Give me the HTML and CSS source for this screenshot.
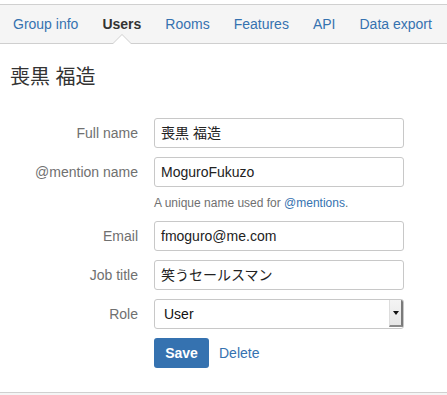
FILE: index.html
```html
<!DOCTYPE html>
<html>
<head>
<meta charset="utf-8">
<link rel="stylesheet" href="styles.css">
</head>
<body>
<nav class="tabs">
  <a class="tab">Group info</a>
  <a class="tab active">Users</a>
  <a class="tab">Rooms</a>
  <a class="tab">Features</a>
  <a class="tab">API</a>
  <a class="tab">Data export</a>
</nav>
<main class="content">
  <h1 class="title">喪黒 福造</h1>
  <form class="form">
    <label class="label">Full name</label>
    <div class="field">喪黒 福造</div>
    <label class="label">@mention name</label>
    <div class="field">MoguroFukuzo</div>
    <div class="help">A unique name used for <a class="link">@mentions</a>.</div>
    <label class="label">Email</label>
    <div class="field">fmoguro@me.com</div>
    <label class="label">Job title</label>
    <div class="field">笑うセールスマン</div>
    <label class="label">Role</label>
    <div class="field select"><span class="select-text">User</span><span class="select-btn"><span class="arrow"></span></span></div>
    <div class="actions">
      <span class="btn">Save</span>
      <a class="link delete">Delete</a>
    </div>
  </form>
</main>
<div class="footer"></div>
</body>
</html>
```
FILE: styles.css
```css
html, body {
  margin: 0;
  padding: 0;
  background: #fff;
  font-family: "Liberation Sans", Arial, "Noto Sans CJK JP", sans-serif;
  color: #333;
  font-size: 14px;
}
.tabs {
  margin-top: 4px;
  display: flex;
  gap: 24px;
  padding-left: 13px;
  height: 38px;
  align-items: center;
  background: #f5f5f5;
  border-top: 1px solid #d0d0d0;
  border-bottom: 1px solid #cfcfcf;
}
.tab {
  position: relative;
  color: #3572b0;
  font-size: 14px;
  line-height: 38px;
  height: 38px;
}
.tab.active {
  color: #333;
  font-weight: bold;
}
.tab.active::before,
.tab.active::after {
  content: "";
  position: absolute;
  left: 50%;
  width: 0;
  height: 0;
  border-left: 9px solid transparent;
  border-right: 9px solid transparent;
}
.tab.active::before {
  bottom: -1px;
  margin-left: -10px;
  border-left-width: 10px;
  border-right-width: 10px;
  border-bottom: 10px solid #cfcfcf;
}
.tab.active::after {
  bottom: -1px;
  margin-left: -9px;
  border-bottom: 9px solid #fff;
}
.content {
  padding: 0 10px;
}
.title {
  margin: 21px 0 29px;
  font-size: 20px;
  line-height: 24px;
  font-weight: normal;
  color: #333;
}
.form {
  display: grid;
  grid-template-columns: 128px 250px;
  grid-template-rows: 30px 30px 16px 30px 30px 30px 30px;
  column-gap: 16px;
  row-gap: 9px;
  align-items: center;
}
.label {
  grid-column: 1;
  text-align: right;
  color: #707070;
  font-size: 14px;
  line-height: 16px;
}
.field {
  grid-column: 2;
  box-sizing: border-box;
  height: 30px;
  border: 1px solid #c8c8c8;
  border-radius: 3px;
  padding: 0 6px;
  line-height: 28px;
  font-size: 14px;
  color: #222;
  background: #fff;
  overflow: hidden;
}
.help {
  grid-column: 2;
  align-self: start;
  margin-top: -2px;
  font-size: 12px;
  line-height: 18px;
  color: #707070;
}
.link {
  color: #3572b0;
}
.select {
  display: flex;
  padding: 0;
}
.select-text {
  flex: 1;
  padding-left: 9px;
  color: #111;
}
.select-btn {
  width: 11px;
  margin: 0 0 1px 0;
  background: linear-gradient(#f4f4f4, #e6e6e6);
  border-left: 1px solid #ddd;
  border-right: 2px solid #7a7a7a;
  border-bottom: 2px solid #8a8a8a;
  display: flex;
  align-items: center;
  justify-content: center;
}
.arrow {
  width: 0;
  height: 0;
  border-left: 3px solid transparent;
  border-right: 3px solid transparent;
  border-top: 4px solid #111;
}
.actions {
  grid-column: 2;
  display: flex;
  align-items: center;
  gap: 10px;
}
.btn {
  box-sizing: border-box;
  width: 55px;
  height: 30px;
  line-height: 30px;
  text-align: center;
  background: #3572b0;
  color: #fff;
  font-weight: bold;
  font-size: 14px;
  border-radius: 3px;
}
.delete {
  font-size: 14px;
}
.footer {
  margin-top: 24px;
  border-top: 1px solid #d0d0d0;
  background: #f5f5f5;
  height: 20px;
}
```
